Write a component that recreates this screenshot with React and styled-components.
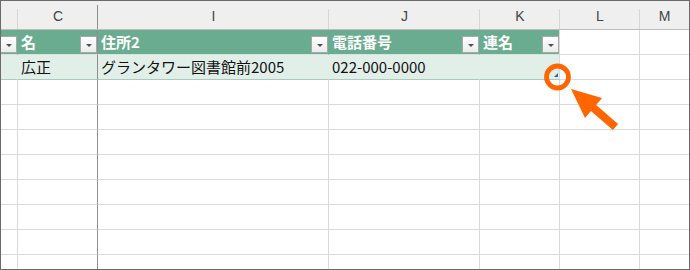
import React from 'react';
import styled, { createGlobalStyle } from 'styled-components';

const GlobalStyle = createGlobalStyle`
    html, body {
        margin: 0;
        padding: 0;
        background: #ffffff;
    }
`;

const COLS = [
    { letter: '', width: 17 },
    { letter: 'C', width: 80 },
    { letter: 'I', width: 231 },
    { letter: 'J', width: 151 },
    { letter: 'K', width: 80 },
    { letter: 'L', width: 80 },
    { letter: 'M', width: 49 },
];

const TABLE_COLS = 5; // B..K
const FROZEN_COL = 1; // right edge of C

const Frame = styled.div`
    position: relative;
    width: 690px;
    height: 270px;
    box-sizing: border-box;
    border: 1px solid #6b6b6b;
    overflow: hidden;
    font-family: "Noto Sans CJK JP", "Noto Sans", sans-serif;
`;

const Sheet = styled.div`
    display: grid;
    grid-template-columns: ${COLS.map(c => c.width + 'px').join(' ')};
    grid-template-rows: 29px repeat(9, 25px) 14px;
`;

const ColHead = styled.div`
    position: relative;
    box-sizing: border-box;
    display: flex;
    align-items: center;
    justify-content: center;
    padding-top: 1px;
    background: #efefef;
    border-bottom: 1px solid #bdbdbd;
    font-family: "Liberation Sans", Arial, sans-serif;
    font-size: 14px;
    color: #444444;

    &::after {
        content: '';
        display: ${p => (p.$last ? 'none' : 'block')};
        position: absolute;
        right: 0;
        top: ${p => (p.$frozen ? 4 : 8)}px;
        bottom: 0;
        width: 1px;
        background: ${p => (p.$frozen ? '#8e8e8e' : '#d6d6d6')};
    }
`;

const bgFor = kind => (kind === 'th' ? '#69ac8f' : kind === 'td' ? '#e2efe9' : '#ffffff');

const Cell = styled.div`
    position: relative;
    box-sizing: border-box;
    display: flex;
    align-items: flex-end;
    justify-content: flex-end;
    overflow: hidden;
    background: ${p => bgFor(p.$kind)};
    border-right: ${p => (p.$last ? 'none' : `1px solid ${p.$right}`)};
    border-bottom: ${p => (p.$bottom ? `1px solid ${p.$bottom}` : 'none')};
    padding-left: ${p => (p.$text ? 3 : 0)}px;
`;

const CellText = styled.span`
    flex: 1;
    min-width: 0;
    white-space: nowrap;
    padding-bottom: 3px;
    font-size: 15px;
    line-height: 18px;
    font-weight: ${p => (p.$head ? 700 : 400)};
    color: ${p => (p.$head ? '#ffffff' : '#111111')};
`;

const FilterButton = styled.span`
    flex-shrink: 0;
    width: 17px;
    height: 17px;
    margin-bottom: 1px;
    box-sizing: border-box;
    border: 1px solid #a9a9a9;
    background: linear-gradient(#ffffff, #ececec);
    display: flex;
    align-items: center;
    justify-content: center;
    padding-top: 2px;

    &::before {
        content: '';
        width: 0;
        height: 0;
        border-left: 3px solid transparent;
        border-right: 3px solid transparent;
        border-top: 3px solid #505050;
    }
`;

const ResizeHandle = styled.span`
    position: absolute;
    right: 1px;
    bottom: 2px;
    width: 0;
    height: 0;
    border-left: 4px solid transparent;
    border-bottom: 4px solid #3e5fae;
`;

const Callout = styled.svg`
    position: absolute;
    left: -1px;
    top: -1px;
    pointer-events: none;
`;

const header = ['', '名', '住所2', '電話番号', '連名'];
const row = ['', '広正', 'グランタワー図書館前2005', '022-000-0000', ''];

function rightColor(kind, i) {
    if (i === FROZEN_COL) return '#8e8e8e';
    if (kind !== 'empty' && i < TABLE_COLS - 1) return bgFor(kind);
    return '#dadada';
}

function TableRow({ kind, values, bottom }) {
    return COLS.map((c, i) => {
        const inTable = i < TABLE_COLS;
        const k = inTable ? kind : 'empty';
        const b = bottom === null ? null : inTable ? bottom : '#dadada';
        return (
            <Cell
                key={i}
                $kind={k}
                $right={rightColor(k, i)}
                $last={i === COLS.length - 1}
                $bottom={b}
                $text={inTable && values[i] !== ''}
            >
                {inTable && values[i] !== '' && <CellText $head={kind === 'th'}>{values[i]}</CellText>}
                {inTable && kind === 'th' && <FilterButton />}
                {inTable && kind === 'td' && i === TABLE_COLS - 1 && <ResizeHandle />}
            </Cell>
        );
    });
}

export default function App() {
    const blanks = Array.from({ length: 8 });
    return (
        <Frame>
            <GlobalStyle />
            <Sheet>
                {COLS.map((c, i) => (
                    <ColHead key={c.letter || i} $frozen={i === FROZEN_COL} $last={i === COLS.length - 1}>
                        {c.letter}
                    </ColHead>
                ))}
                <TableRow kind="th" values={header} bottom="#d4e7de" />
                <TableRow kind="td" values={row} bottom="#a9cbbc" />
                {blanks.map((_, r) => (
                    <TableRow key={r} kind="empty" values={[]} bottom={r === blanks.length - 1 ? null : '#dadada'} />
                ))}
            </Sheet>

            <Callout width="690" height="270" viewBox="0 0 690 270">
                <circle cx="557.5" cy="77" r="11" fill="none" stroke="#ff6600" strokeWidth="4.8" />
                <polygon
                    fill="#ff6600"
                    points="571,89 602,98 596.1,105 618.1,124 612.9,130 590.9,111 585,118"
                />
            </Callout>
        </Frame>
    );
}
